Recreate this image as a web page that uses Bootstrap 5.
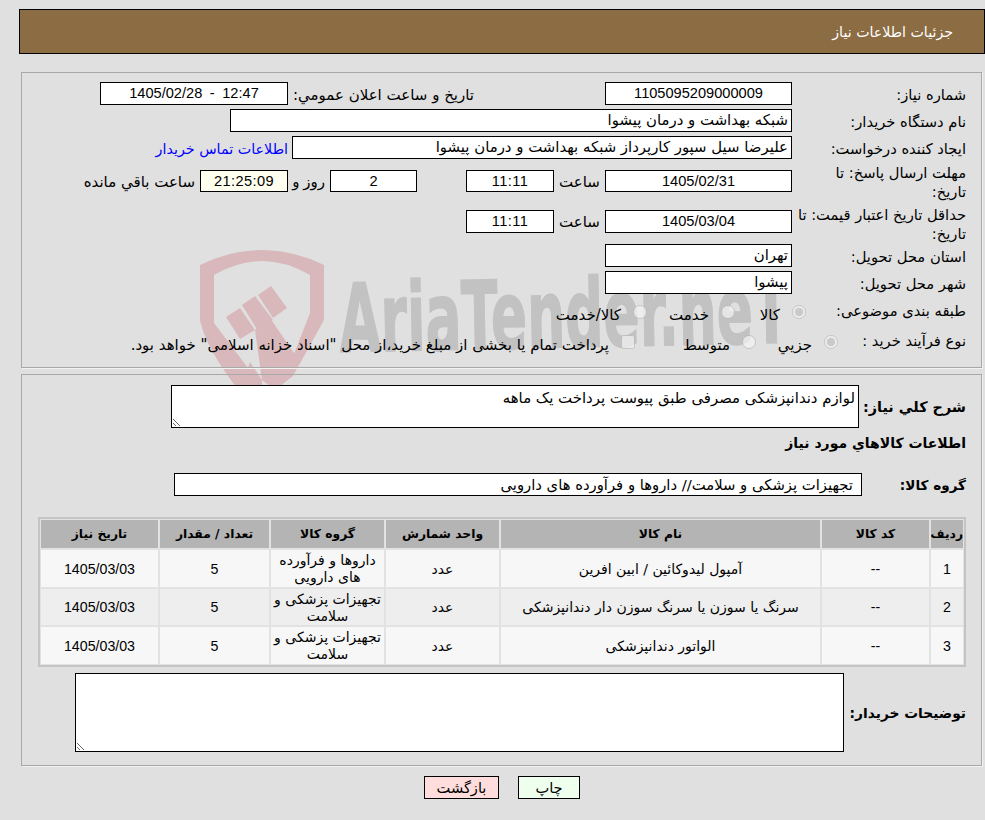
<!DOCTYPE html>
<html lang="fa" dir="rtl">
<head>
<meta charset="utf-8">
<title>جزئیات اطلاعات نیاز</title>
<link href="https://cdn.jsdelivr.net/npm/bootstrap@5.3.0/dist/css/bootstrap.min.css" rel="stylesheet">
<style>
body{background:#e0e0e0;font-family:"Liberation Sans","DejaVu Sans",sans-serif;font-size:14.6px;color:#000;line-height:18px;position:relative;min-height:820px;padding:9px 0 0 19px}
.ar{font-family:"DejaVu Sans",sans-serif}
.mark-sheet{position:absolute;left:0;top:0;z-index:0}
.head-bar{position:relative;z-index:1;background:#8c6c42;border:1px solid #000;height:45px;color:#fff;padding:0 31px;font-family:"DejaVu Sans",sans-serif;font-size:14.2px}
.sec{position:relative;z-index:1;border:1px solid #a8a8a8;box-shadow:1px 1px 0 #f2f2f2;margin:0 3px 0 2px;padding-right:15px}
.sec-top{margin-top:18px;height:296px;padding-top:9px}
.sec-low{margin-top:6px;height:392px;padding-top:10px}
.rh27{height:27px}.rh34{height:34px}.rh42{height:42px}.rh39{height:39px}.rh30{height:30px}.rh32{height:32px}
.lbl{width:174px;font-family:"DejaVu Sans",sans-serif;font-size:14.7px;white-space:nowrap}
.lbl-top{line-height:19px}
.sm-lbl{font-family:"DejaVu Sans",sans-serif;font-size:15px;white-space:nowrap}
.fld{background:#fff;border:1px solid #000;height:23px;white-space:nowrap;overflow:hidden;text-align:center;line-height:21px}
.fld-ar{font-family:"DejaVu Sans",sans-serif;font-size:14.9px;text-align:right;padding-right:3px}
.spaced{word-spacing:3.5px}
.timed{letter-spacing:.4px}
.tm7{margin-top:7px;height:22px}.tm5{margin-top:5px}
.txt7{margin-top:7px;padding-top:3px}.txt5{margin-top:5px;padding-top:3px}
.w187{width:187px}.w88{width:88px}.w87{width:87px}.w188{width:188px}.w562{width:562px}.w500{width:500px}
.slot52{width:51px}.slot49{width:49px}.slot42{width:42px;padding-right:5px;word-spacing:-1px}
.slot-ann{width:317px;padding-right:131px}
.pad4{padding-right:4px}.pad5{padding-right:5px}
.tail-fld{background:#fffff0}
a.buyer{color:#00f;text-decoration:none;font-size:14.3px}
.rad{margin:7px 0 0;width:14px;height:14px;flex:none}
.opt-lbl{width:160px}.opt-lbl2{width:128px}
.opt{font-family:"DejaVu Sans",sans-serif;font-size:15px;white-space:nowrap;padding-top:8px}
.g12{padding-right:12px}
.o1{width:57px}.o2{width:74px}.o3{width:82px}
.p1{width:68px}.p2{width:107px}.p3{width:490px}
.blbl{font-family:"DejaVu Sans",sans-serif;font-weight:700;font-size:14.4px;white-space:nowrap}
.bl107{width:107px}.bl104{width:104px;font-size:13.6px}.bl122{width:122px;font-size:13.8px}
.txa{background:#fff;border:1px solid #000;border-radius:0;padding:0 3px 0 0;font-family:"DejaVu Sans",sans-serif;font-size:14.9px;line-height:18px;color:#000;min-height:0;box-shadow:none;display:block;resize:both}
.txa:focus{border-color:#000;box-shadow:none}
.txa1{width:688px;height:43px;padding-top:3px}
.txa2{width:769px;height:79px}
.need-line{margin-top:6px;height:18px;font-size:14px}
.group-line{margin-top:21px;height:23px}
.grp-fld{width:688px;padding-right:8px;font-size:14.8px}
.goods-wrap{margin-top:21px;width:928px}
.goods{border:2px solid #c4c4c4;border-collapse:separate;border-spacing:0;width:928px;table-layout:fixed;margin:0}
.goods th,.goods td{border:1px solid #e2e2e2;text-align:center;padding:0;vertical-align:middle;overflow:hidden}
.goods th{background:#b4b4b4;font-family:"DejaVu Sans",sans-serif;font-size:12.3px;font-weight:700;height:30px}
.goods td{background:#f7f7f7;line-height:17px;padding-top:1px;font-size:14.2px}
.goods tr.alt td{background:#eee}
.goods td.ar{font-size:14px}
.goods tr.h39 td{height:39px}.goods tr.h38 td{height:38px}
.c34{width:34px}.c109{width:109px}.c321{width:321px}.c115{width:115px}.c111{width:111px}.c119{width:119px}
.desc-line{margin-top:6px}
.foot-btns{position:relative;z-index:1;margin-top:10px;gap:19px}
.act{height:23px;border:1px solid #000;border-radius:0;padding:0;font-family:"DejaVu Sans",sans-serif;font-size:14.6px;color:#000;line-height:20px}
.act-back{background:#fdd;width:75px}
.act-print{background:#efe;width:62px}
</style>
</head>
<body>
<svg class="mark-sheet" dir="ltr" width="985" height="450" viewBox="0 0 985 450" aria-hidden="true">
<g fill="#d8b8ba">
<path fill-rule="evenodd" d="M200 265 Q262 235 324 265 V320 L293 376 L277 352 L294 354 L310 313 V275 Q262 247 214 275 V323 L248 368 L250 362 L262 380 L262 415 L233 383 Q205 345 200 320 Z"/>
<path d="M226 317 L240 308 L255 330 L240 339 Z"/>
<path d="M242 305 L255 296 L273 320 L258 331 Z"/>
<path d="M258 295 L271 286 L287 308 L273 318 Z"/>
<path d="M255 330 L270 318 L296 356 L293 376 L275 390 L262 380 Z"/>
</g>
<text x="340" y="352" direction="ltr" text-anchor="start" transform="rotate(-1.2 340 352)" font-family="DejaVu Sans" font-weight="700" font-size="95" fill="#c2c2c2" stroke="#c2c2c2" stroke-width="1.5" textLength="450" lengthAdjust="spacingAndGlyphs">AriaTender.neT</text>
</svg>

<div class="head-bar d-flex align-items-center">جزئیات اطلاعات نیاز</div>

<section class="sec sec-top">
  <div class="d-flex rh27">
    <div class="lbl flex-shrink-0 d-flex align-items-start"><span class="mt-1">شماره نیاز:</span></div>
    <div class="fld w187 flex-shrink-0">1105095209000009</div>
    <div class="slot-ann sm-lbl flex-shrink-0 pt-1">تاریخ و ساعت اعلان عمومي:</div>
    <div class="fld spaced w188 flex-shrink-0">12:47 - 1405/02/28</div>
  </div>
  <div class="d-flex rh27">
    <div class="lbl flex-shrink-0"><span class="d-block mt-1">نام دستگاه خریدار:</span></div>
    <div class="fld fld-ar w562 flex-shrink-0">شبکه بهداشت و درمان پیشوا</div>
  </div>
  <div class="d-flex rh27">
    <div class="lbl flex-shrink-0"><span class="d-block mt-1">ایجاد کننده درخواست:</span></div>
    <div class="fld fld-ar w500 flex-shrink-0">علیرضا سیل سپور کارپرداز شبکه بهداشت و درمان پیشوا</div>
    <div class="sm-lbl pad4 pt-1"><a class="buyer" href="#">اطلاعات تماس خریدار</a></div>
  </div>
  <div class="d-flex rh42">
    <div class="lbl lbl-top flex-shrink-0">مهلت ارسال پاسخ: تا<br>تاریخ:</div>
    <div class="fld tm7 w187 flex-shrink-0">1405/02/31</div>
    <div class="sm-lbl slot52 text-center flex-shrink-0 txt7">ساعت</div>
    <div class="fld timed tm7 w88 flex-shrink-0">11:11</div>
    <div class="slot49 flex-shrink-0"></div>
    <div class="fld tm7 w87 flex-shrink-0">2</div>
    <div class="sm-lbl slot42 flex-shrink-0 txt7">روز و</div>
    <div class="fld timed tail-fld tm7 w88 flex-shrink-0">21:25:09</div>
    <div class="sm-lbl pad5 txt7">ساعت باقي مانده</div>
  </div>
  <div class="d-flex rh39">
    <div class="lbl lbl-top flex-shrink-0">حداقل تاریخ اعتبار قیمت: تا<br>تاریخ:</div>
    <div class="fld tm5 w187 flex-shrink-0">1405/03/04</div>
    <div class="sm-lbl slot52 text-center flex-shrink-0 txt5">ساعت</div>
    <div class="fld timed tm5 w88 flex-shrink-0">11:11</div>
  </div>
  <div class="d-flex rh27">
    <div class="lbl flex-shrink-0"><span class="d-block mt-1">استان محل تحویل:</span></div>
    <div class="fld fld-ar w187 flex-shrink-0">تهران</div>
  </div>
  <div class="d-flex rh27">
    <div class="lbl flex-shrink-0"><span class="d-block mt-1">شهر محل تحویل:</span></div>
    <div class="fld fld-ar w187 flex-shrink-0">پیشوا</div>
  </div>
  <div class="d-flex rh30">
    <div class="lbl opt-lbl flex-shrink-0 pt-1">طبقه بندی موضوعی:</div>
    <input class="rad" type="radio" name="cat" checked disabled aria-label="کالا">
    <div class="opt o1 g12 flex-shrink-0">کالا</div>
    <input class="rad" type="radio" name="cat" disabled aria-label="خدمت">
    <div class="opt o2 g12 flex-shrink-0">خدمت</div>
    <input class="rad" type="radio" name="cat" disabled aria-label="کالا/خدمت">
    <div class="opt o3 g12 flex-shrink-0">کالا/خدمت</div>
  </div>
  <div class="d-flex rh32">
    <div class="lbl opt-lbl2 flex-shrink-0 pt-1">نوع فرآیند خرید :</div>
    <input class="rad" type="radio" name="proc" checked disabled aria-label="جزيي">
    <div class="opt p1 g12 flex-shrink-0">جزيي</div>
    <input class="rad" type="radio" name="proc" disabled aria-label="متوسط">
    <div class="opt p2 g12 flex-shrink-0">متوسط</div>
    <input class="rad" type="checkbox" disabled aria-label="پرداخت">
    <div class="opt p3 g12 flex-shrink-0">پرداخت تمام یا بخشی از مبلغ خرید،از محل "اسناد خزانه اسلامی" خواهد بود.</div>
  </div>
</section>

<section class="sec sec-low">
  <div class="d-flex align-items-center">
    <div class="blbl bl107 flex-shrink-0">شرح کلي نیاز:</div>
    <textarea class="form-control txa txa1 flex-shrink-0" readonly aria-label="شرح کلي نیاز">لوازم دندانپزشکی مصرفی طبق پیوست پرداخت یک ماهه</textarea>
  </div>
  <div class="blbl need-line">اطلاعات کالاهاي مورد نیاز</div>
  <div class="d-flex align-items-center group-line">
    <div class="blbl bl104 flex-shrink-0">گروه کالا:</div>
    <div class="fld fld-ar grp-fld flex-shrink-0">تجهیزات پزشکی و سلامت// داروها و فرآورده های دارویی</div>
  </div>
  <div class="goods-wrap">
    <table class="goods">
      <colgroup><col class="c34"><col class="c109"><col class="c321"><col class="c115"><col class="c115"><col class="c111"><col class="c119"></colgroup>
      <thead><tr><th>ردیف</th><th>کد کالا</th><th>نام کالا</th><th>واحد شمارش</th><th>گروه کالا</th><th>تعداد / مقدار</th><th>تاریخ نیاز</th></tr></thead>
      <tbody>
        <tr class="h39"><td>1</td><td>--</td><td class="ar">آمپول لیدوکائین / ابین افرین</td><td class="ar">عدد</td><td class="ar">داروها و فرآورده<br>های دارویی</td><td>5</td><td>1405/03/03</td></tr>
        <tr class="h38 alt"><td>2</td><td>--</td><td class="ar">سرنگ یا سوزن یا سرنگ سوزن دار دندانپزشکی</td><td class="ar">عدد</td><td class="ar">تجهیزات پزشکی و<br>سلامت</td><td>5</td><td>1405/03/03</td></tr>
        <tr class="h39"><td>3</td><td>--</td><td class="ar">الواتور دندانپزشکی</td><td class="ar">عدد</td><td class="ar">تجهیزات پزشکی و<br>سلامت</td><td>5</td><td>1405/03/03</td></tr>
      </tbody>
    </table>
  </div>
  <div class="d-flex align-items-center desc-line">
    <div class="blbl bl122 flex-shrink-0">توضیحات خریدار:</div>
    <textarea class="form-control txa txa2 flex-shrink-0" readonly aria-label="توضیحات خریدار"></textarea>
  </div>
</section>

<div class="d-flex justify-content-center foot-btns">
  <button type="button" class="btn act act-print">چاپ</button>
  <button type="button" class="btn act act-back">بازگشت</button>
</div>
</body>
</html>
